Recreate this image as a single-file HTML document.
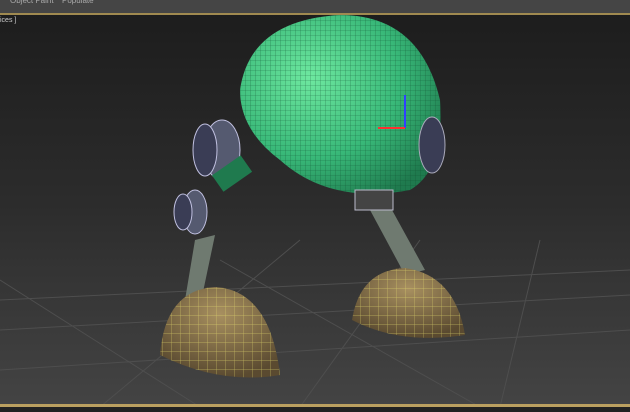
<!DOCTYPE html><html><head><style>body{margin:0;width:630px;height:407px;overflow:hidden;background:#222;font-family:"Liberation Sans",sans-serif}</style></head><body>
<svg width="630" height="407" xmlns="http://www.w3.org/2000/svg">
<defs>
<linearGradient id="bg" x1="0" y1="0" x2="0" y2="1"><stop offset="0" stop-color="#1c1c1c"/><stop offset="0.5" stop-color="#2c2c2c"/><stop offset="1" stop-color="#444"/></linearGradient>
<radialGradient id="hd" cx="0.35" cy="0.35" r="0.75"><stop offset="0" stop-color="#6ee8a0"/><stop offset="0.6" stop-color="#38b878"/><stop offset="1" stop-color="#1f7a4e"/></radialGradient>
<radialGradient id="ft" cx="0.5" cy="0.3" r="0.7"><stop offset="0" stop-color="#a89060"/><stop offset="1" stop-color="#5a4a30"/></radialGradient>
<pattern id="mesh" width="5" height="5" patternUnits="userSpaceOnUse"><path d="M0 0H5M0 0V5" stroke="#0e4a2c" stroke-width="0.6" opacity="0.7"/></pattern>
<pattern id="ym" width="9" height="9" patternUnits="userSpaceOnUse"><path d="M0 0H9M0 0V9" stroke="#e8e070" stroke-width="0.7"/></pattern>
</defs>
<rect width="630" height="407" fill="url(#bg)"/>
<rect width="630" height="13" fill="#454545"/>
<text x="10" y="3" font-size="8" fill="#aaa">Object Paint</text>
<text x="62" y="3" font-size="8" fill="#aaa">Populate</text>
<rect y="13" width="630" height="2" fill="#a08a50"/>
<text x="0" y="22" font-size="7" fill="#ccc">ices ]</text>
<g stroke="#4e4e4e" stroke-width="1" fill="none">
<path d="M0 300L630 270M0 330L630 295M0 370L630 330M100 407L300 240M300 407L420 240M500 407L540 240M0 280L200 407M220 260L480 407"/>
</g>
<rect x="0" y="404" width="630" height="3" fill="#bba060"/>
<!-- head -->
<path d="M240 90Q250 20 340 15Q420 15 440 100Q445 170 410 190Q330 205 280 160Q240 130 240 90Z" fill="url(#hd)"/>
<path d="M240 90Q250 20 340 15Q420 15 440 100Q445 170 410 190Q330 205 280 160Q240 130 240 90Z" fill="url(#mesh)"/>
<ellipse cx="432" cy="145" rx="13" ry="28" fill="#3a3d55" stroke="#aab"/>
<!-- left leg -->
<path d="M195 240L215 235L195 330L180 330Z" fill="#6f7a70"/>
<ellipse cx="222" cy="150" rx="18" ry="30" fill="#555a70" stroke="#c0c0e0"/>
<ellipse cx="205" cy="150" rx="12" ry="26" fill="#3a3d55" stroke="#c0c0e0"/>
<rect x="215" y="165" width="35" height="20" fill="#1f7a4e" transform="rotate(-35 230 175)"/>
<ellipse cx="195" cy="212" rx="12" ry="22" fill="#555a70" stroke="#c0c0e0"/>
<ellipse cx="183" cy="212" rx="9" ry="18" fill="#3a3d55" stroke="#c0c0e0"/>
<!-- right leg -->
<path d="M370 210L392 210L425 270L405 275Z" fill="#6f7a70"/>
<rect x="355" y="190" width="38" height="20" fill="#444" stroke="#bbc"/>
<!-- feet -->
<path d="M160 355Q165 290 215 287Q270 290 280 375Q220 385 160 355Z" fill="url(#ft)"/>
<path d="M160 355Q165 290 215 287Q270 290 280 375Q220 385 160 355Z" fill="url(#ym)" opacity="0.7"/>
<path d="M352 320Q360 270 405 268Q455 275 465 335Q400 345 352 320Z" fill="url(#ft)"/>
<path d="M352 320Q360 270 405 268Q455 275 465 335Q400 345 352 320Z" fill="url(#ym)" opacity="0.7"/>
<!-- gizmo -->
<path d="M405 128V95" stroke="#3040ff" stroke-width="2"/><path d="M405 128H378" stroke="#ff3030" stroke-width="2"/>
</svg></body></html>
